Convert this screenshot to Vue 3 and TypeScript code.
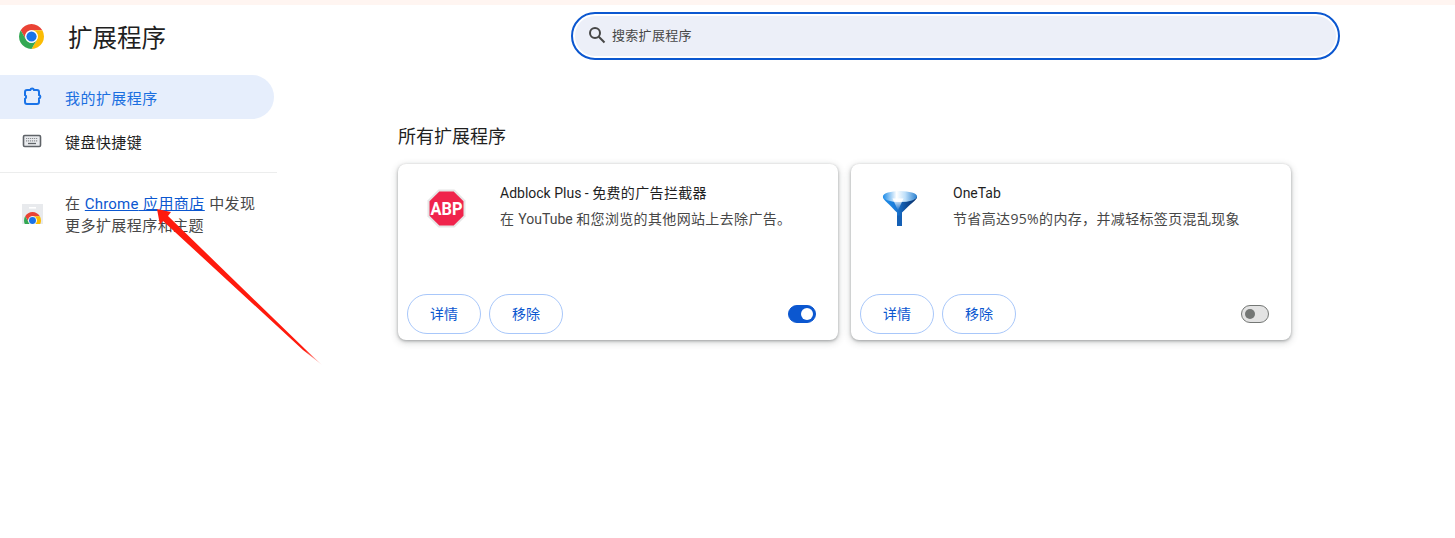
<script setup lang="ts">
interface Extension {
  name: string;
  desc: string;
  enabled: boolean;
  icon: "abp" | "funnel";
}

const extensions: Extension[] = [
  { name: "Adblock Plus - 免费的广告拦截器", desc: "在 YouTube 和您浏览的其他网站上去除广告。", enabled: true, icon: "abp" },
  { name: "OneTab", desc: "节省高达95%的内存，并减轻标签页混乱现象", enabled: false, icon: "funnel" },
];

const chromeParts = [
  { fill: "#ea4335", d: "M43.05 13A22 22 0 0 0 4.95 13L14.47 29.5A11 11 0 0 1 24 13Z" },
  { fill: "#fbbc04", d: "M43.05 13L24 13A11 11 0 0 1 33.53 29.5L24 46A22 22 0 0 0 43.05 13Z" },
  { fill: "#34a853", d: "M4.95 13L14.47 29.5A11 11 0 0 0 33.53 29.5L24 46A22 22 0 0 1 4.95 13Z" },
];

// latin runs use a narrower face than the CJK ones
function runs(text: string) {
  return text.split(/([A-Za-z][A-Za-z -]*)/).filter(Boolean).map((t) => ({ t, latin: /^[A-Za-z]/.test(t) }));
}
</script>

<template>
  <div class="page">
    <div class="strip"></div>
    <header class="header">
      <div class="brand">
        <svg class="logo" viewBox="2 2 44 44" width="25" height="25">
          <path v-for="p in chromeParts" :key="p.fill" :fill="p.fill" :d="p.d" />
          <circle cx="24" cy="24" r="11" fill="#fff" />
          <circle cx="24" cy="24" r="9" fill="#1a73e8" />
        </svg>
        <h1 class="title">扩展程序</h1>
      </div>
      <div class="search">
        <svg class="search-icon" viewBox="0 0 18 18" width="18" height="18">
          <circle cx="7" cy="7" r="5" fill="none" stroke="#474747" stroke-width="2" />
          <path d="M10.8 10.8L16.5 16.5" stroke="#474747" stroke-width="2" />
        </svg>
        <span class="search-text">搜索扩展程序</span>
      </div>
    </header>

    <div class="layout">
      <aside class="sidebar">
        <a class="nav-item active">
          <svg class="nav-icon" viewBox="0 0 20 20" width="20" height="20">
            <path
              d="M5 3H8.3A1.9 1.9 0 0 1 12 3H15A2 2 0 0 1 17 5V8A1.8 1.8 0 0 1 17 11.5V15A2 2 0 0 1 15 17H5A2 2 0 0 1 3 15V11.8A2 2 0 0 0 3 8.2V5A2 2 0 0 1 5 3Z"
              fill="none"
              stroke="#1a73e8"
              stroke-width="2"
            />
          </svg>
          <span>我的扩展程序</span>
        </a>
        <a class="nav-item">
          <svg class="nav-icon" viewBox="0 0 20 20" width="20" height="20">
            <rect x="1.5" y="4.5" width="17" height="11" rx="1.2" fill="#e8eaed" stroke="#5f6368" stroke-width="1.6" />
            <path d="M4 7.5H16M4 9.8H16" stroke="#8a8d91" stroke-width="1.2" stroke-dasharray="1.2 .8" />
            <path d="M6 12.5H14" stroke="#5f6368" stroke-width="1.3" />
          </svg>
          <span>键盘快捷键</span>
        </a>
        <div class="divider"></div>
        <div class="promo">
          <svg class="store-icon" viewBox="0 0 21 21" width="21" height="21">
            <defs>
              <clipPath id="bag"><rect x="0" y="0" width="21" height="20" /></clipPath>
            </defs>
            <rect x="0" y="0" width="21" height="20" fill="#e8eaed" />
            <rect x="7" y="3" width="7" height="1.6" fill="#fff" />
            <g clip-path="url(#bag)">
              <svg x="2" y="8" width="17" height="17" viewBox="2 2 44 44">
                <path v-for="p in chromeParts" :key="p.fill" :fill="p.fill" :d="p.d" />
                <circle cx="24" cy="24" r="11" fill="#fff" />
                <circle cx="24" cy="24" r="9" fill="#1a73e8" />
              </svg>
            </g>
          </svg>
          <p class="promo-text">在 <a class="link"><span class="latin-big">Chrome</span> 应用商店</a> 中发现<br />更多扩展程序和主题</p>
        </div>
      </aside>

      <main class="main">
        <h2 class="section-title">所有扩展程序</h2>
        <div class="cards">
          <article v-for="ext in extensions" :key="ext.name" class="card">
            <div class="card-top">
              <svg v-if="ext.icon === 'abp'" class="ext-icon" viewBox="-0.5 -0.5 39 39" width="39" height="39">
                <polygon points="11,0 27,0 38,11 38,27 27,38 11,38 0,27 0,11" fill="#e6e6e6" />
                <polygon points="11.8,2 26.2,2 36,11.8 36,26.2 26.2,36 11.8,36 2,26.2 2,11.8" fill="#f0244c" />
                <text x="19" y="25.5" text-anchor="middle" textLength="32" lengthAdjust="spacingAndGlyphs" class="abp-text">ABP</text>
              </svg>
              <svg v-else class="ext-icon" viewBox="-0.5 -0.5 39 39" width="39" height="39">
                <defs>
                  <linearGradient id="cone" x1="0" y1="0" x2="1" y2="0">
                    <stop offset="0" stop-color="#1f8de8" />
                    <stop offset=".38" stop-color="#1a7ad8" />
                    <stop offset=".7" stop-color="#0c4a96" />
                    <stop offset="1" stop-color="#0a2f66" />
                  </linearGradient>
                  <linearGradient id="rim" x1="0" y1="0" x2="1" y2="0">
                    <stop offset="0" stop-color="#1f8de8" />
                    <stop offset=".4" stop-color="#ffffff" />
                    <stop offset=".65" stop-color="#bfe0fa" />
                    <stop offset="1" stop-color="#2a80d0" />
                  </linearGradient>
                  <linearGradient id="wedge" x1="0" y1="0" x2="0" y2="1">
                    <stop offset="0" stop-color="#ffffff" />
                    <stop offset="1" stop-color="#ffffff" stop-opacity="0" />
                  </linearGradient>
                </defs>
                <path d="M2.5 7.5C2.5 1 36.5 1 36.5 7.5C36.5 10 34 11 21.5 23V35.5C21.5 36.5 16.5 36.5 16.5 35.5V23C5 11 2.5 10 2.5 7.5Z" fill="url(#cone)" />
                <ellipse cx="19.5" cy="7" rx="17" ry="5.5" fill="url(#rim)" />
                <path d="M12 9L17.5 21L23 9Z" fill="url(#wedge)" />
                <rect x="16.5" y="26" width="5" height="10.5" fill="#1560b5" />
              </svg>
              <div class="ext-info">
                <div class="ext-name">
                  <span v-for="r in runs(ext.name)" :key="r.t" :class="{ latin: r.latin }">{{ r.t }}</span>
                </div>
                <div class="ext-desc">
                  <span v-for="r in runs(ext.desc)" :key="r.t" :class="{ latin: r.latin }">{{ r.t }}</span>
                </div>
              </div>
            </div>
            <div class="card-bottom">
              <button class="btn">详情</button>
              <button class="btn">移除</button>
              <span class="toggle" :class="{ on: ext.enabled }"><span class="knob"></span></span>
            </div>
          </article>
        </div>
      </main>
    </div>

    <svg class="arrow" viewBox="0 0 1455 538" width="1455" height="538">
      <defs>
        <linearGradient id="arrow-fade" gradientUnits="userSpaceOnUse" x1="157" y1="209" x2="322" y2="365">
          <stop offset="0" stop-color="#ff1a0d" />
          <stop offset=".9" stop-color="#ff1a0d" />
          <stop offset="1" stop-color="#ff1a0d" stop-opacity=".1" />
        </linearGradient>
      </defs>
      <polygon points="157,209 171,212 168,216 305,349 322,365 303,350 163,221 160,225" fill="url(#arrow-fade)" />
    </svg>
  </div>
</template>

<style scoped>
.page {
  position: relative;
  width: 1455px;
  height: 538px;
  overflow: hidden;
  background: #fff;
  color: #1f1f1f;
  font-family: "Open Sans", "Noto Sans CJK SC", sans-serif;
}
.strip {
  height: 5px;
  background: #fff5f1;
}
.header {
  display: flex;
  height: 70px;
}
.brand {
  display: flex;
  align-items: center;
  gap: 24px;
  width: 571px;
  height: 65px;
  padding-left: 19px;
  box-sizing: border-box;
}
.logo {
  flex: none;
  margin-top: -3px;
}
.title {
  margin: 0;
  font-size: 24.5px;
  font-weight: 400;
  line-height: 32px;
}
.search {
  display: flex;
  align-items: center;
  width: 769px;
  height: 48px;
  margin-top: 7px;
  padding: 0 0 2px 15px;
  box-sizing: border-box;
  border: 2px solid #0b57d0;
  border-radius: 24px;
  background: #eceff8;
  box-shadow: inset 0 0 0 2px #fff;
}
.search-icon {
  flex: none;
}
.search-text {
  margin: 0 0 1px 6px;
  font-size: 13px;
  letter-spacing: 0.3px;
  color: #474747;
}
.layout {
  display: flex;
}
.sidebar {
  flex: none;
  width: 277px;
}
.nav-item {
  display: flex;
  align-items: center;
  gap: 23px;
  width: 274px;
  height: 44px;
  padding-left: 22px;
  box-sizing: border-box;
  font-size: 15px;
  letter-spacing: 0.45px;
  border-radius: 0 22px 22px 0;
}
.nav-item.active {
  background: #e6eefc;
  color: #1a6fe0;
}
.nav-icon {
  flex: none;
}
.divider {
  height: 1px;
  margin-top: 9px;
  background: #eceded;
}
.promo {
  display: flex;
  align-items: center;
  gap: 22px;
  margin-top: 19px;
  padding-left: 22px;
}
.store-icon {
  flex: none;
  margin-top: 1px;
}
.promo-text {
  margin: 0;
  font-size: 15px;
  letter-spacing: 0.45px;
  line-height: 22px;
  color: #474747;
  white-space: nowrap;
}
.latin-big {
  font-family: Roboto, sans-serif;
  font-size: 15px;
  letter-spacing: 0.2px;
  line-height: 1;
}
.link {
  color: #0b57d0;
  text-decoration: underline;
}
.main {
  flex: none;
  padding-left: 121px;
}
.section-title {
  margin: 0;
  padding-top: 48px;
  height: 89px;
  box-sizing: border-box;
  font-size: 18px;
  font-weight: 400;
  line-height: 26px;
}
.cards {
  display: flex;
  gap: 13px;
}
.card {
  display: flex;
  flex-direction: column;
  justify-content: space-between;
  width: 440px;
  height: 176px;
  padding: 0 22px 6px 9px;
  box-sizing: border-box;
  border-radius: 8px;
  background: #fff;
  box-shadow: 0 1px 3px rgba(60, 64, 67, 0.4), 0 2px 7px 1px rgba(60, 64, 67, 0.2);
}
.card-top {
  display: flex;
  gap: 34px;
  padding: 25px 0 0 20px;
}
.ext-icon {
  flex: none;
}
.abp-text {
  font-family: Roboto, sans-serif;
  font-size: 18px;
  font-weight: 700;
  fill: #fff;
}
.ext-info {
  margin-top: -6px;
}
.ext-name {
  font-size: 14px;
  letter-spacing: 0.35px;
  line-height: 20px;
}
.ext-desc {
  margin-top: 6px;
  font-size: 14px;
  letter-spacing: 0.35px;
  line-height: 20px;
  color: #474747;
}
.latin {
  font-family: Roboto, sans-serif;
  font-size: 14px;
  letter-spacing: 0;
}
.card-bottom {
  display: flex;
  align-items: center;
  gap: 8px;
}
.btn {
  width: 74px;
  height: 40px;
  padding: 0 0 2px;
  border: 1px solid #a8c7fa;
  border-radius: 20px;
  background: #fff;
  color: #0b57d0;
  font-family: inherit;
  font-size: 14px;
}
.toggle {
  display: flex;
  align-items: center;
  width: 28px;
  height: 18px;
  margin-left: auto;
  padding: 0 3px;
  box-sizing: border-box;
  border: 1px solid #747775;
  border-radius: 9px;
  background: #e3e3e3;
}
.knob {
  width: 10px;
  height: 10px;
  border-radius: 50%;
  background: #747775;
}
.toggle.on {
  justify-content: flex-end;
  padding: 0 2px;
  border-color: #0b57d0;
  background: #0b57d0;
}
.toggle.on .knob {
  width: 12px;
  height: 12px;
  background: #fff;
}
.arrow {
  position: absolute;
  top: 0;
  left: 0;
  pointer-events: none;
}
</style>
